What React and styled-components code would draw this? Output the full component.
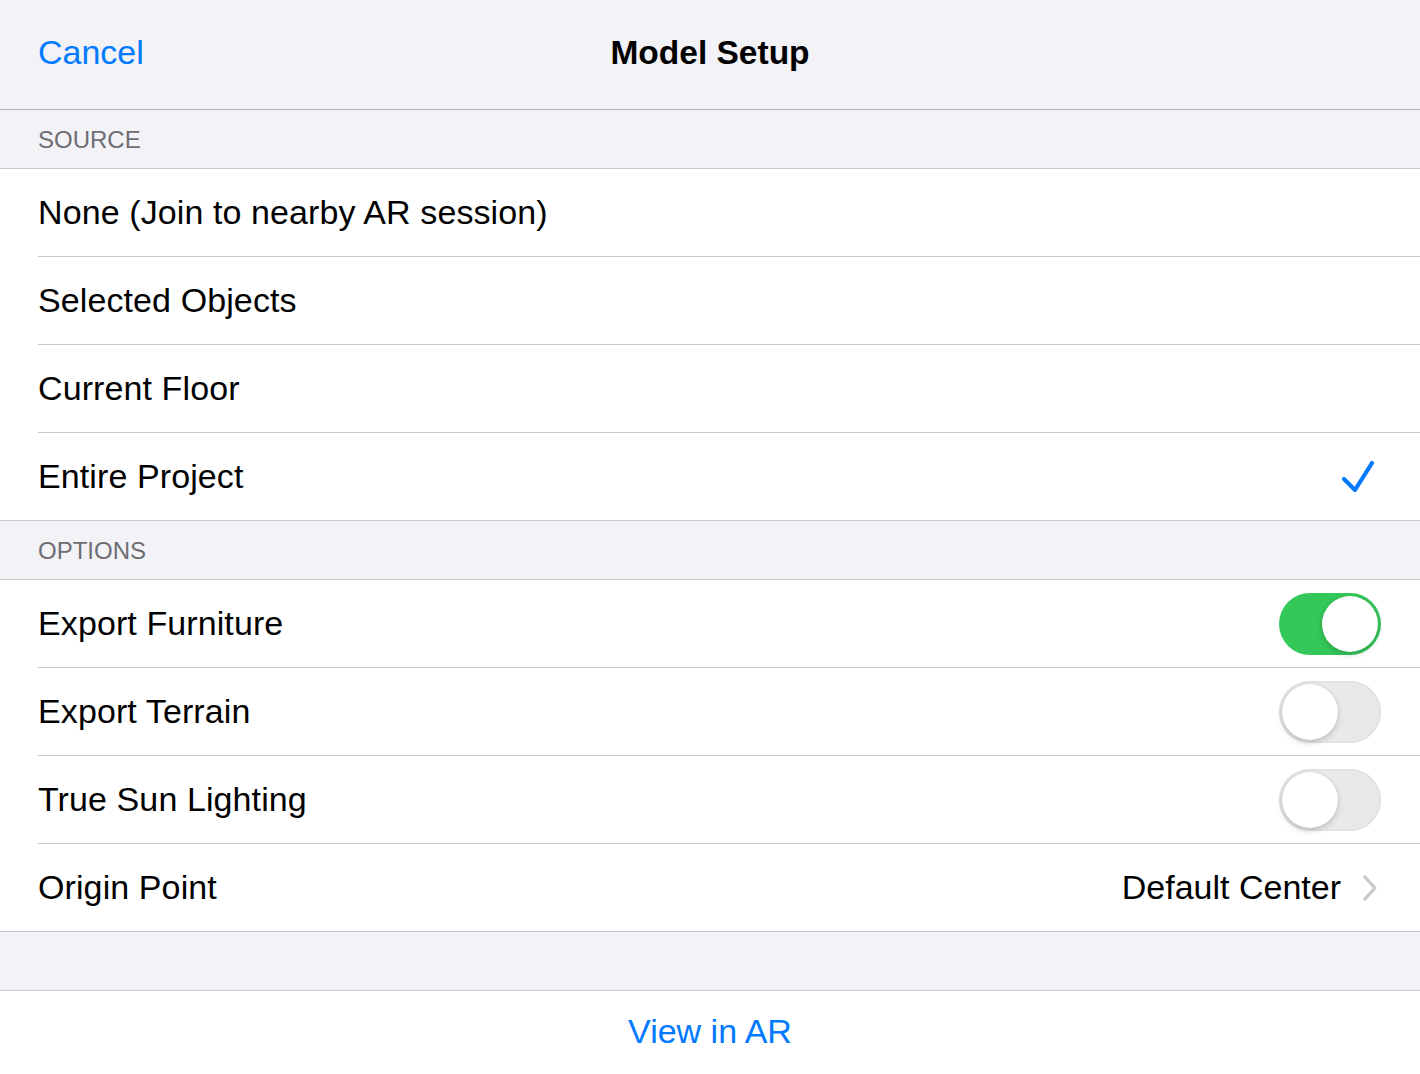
import React from "react";
import styled, { createGlobalStyle } from "styled-components";

const GlobalStyle = createGlobalStyle`
  html, body {
    margin: 0;
    padding: 0;
    background: #f2f2f7;
  }
  * {
    box-sizing: border-box;
  }
`;

const Page = styled.div`
  width: 1420px;
  height: 1074px;
  overflow: hidden;
  display: flex;
  flex-direction: column;
  background: #f2f2f7;
  font-family: "Liberation Sans", Arial, sans-serif;
  color: #000;
`;

const NavBar = styled.header`
  height: 110px;
  flex-shrink: 0;
  display: grid;
  grid-template-columns: 1fr auto 1fr;
  align-items: center;
  padding: 0 38px 4px;
  background: #f2f2f7;
  border-bottom: 1px solid #b3b3b8;
`;

const NavButton = styled.button`
  justify-self: start;
  border: 0;
  background: none;
  padding: 0;
  font-family: inherit;
  font-size: 34px;
  color: #007aff;
`;

const NavTitle = styled.h1`
  margin: 0;
  font-size: 33.5px;
  font-weight: 700;
  letter-spacing: 0;
`;

const SectionHeader = styled.div`
  height: 59px;
  flex-shrink: 0;
  display: flex;
  align-items: center;
  padding: 2px 38px 0;
  font-size: 24px;
  color: #6d6d72;
  text-transform: uppercase;
  border-bottom: 1px solid #c8c7cc;
`;

const Group = styled.section`
  background: #fff;
  border-bottom: 1px solid #c8c7cc;
  flex-shrink: 0;
`;

const Row = styled.div`
  padding-left: 38px;
  background: #fff;

  &:last-child > div {
    height: 87px;
    border-bottom: 0;
  }
`;

const RowInner = styled.div`
  height: 88px;
  display: flex;
  align-items: center;
  justify-content: space-between;
  padding-right: 39px;
  border-bottom: 1px solid #c8c7cc;
`;

const Label = styled.span`
  font-size: 34px;
  letter-spacing: 0.1px;
`;

const Detail = styled.div`
  display: flex;
  align-items: center;
  gap: 21px;
  padding-right: 3px;
  font-size: 34px;
`;

const Check = styled.svg`
  width: 34px;
  height: 34px;
  margin-right: 6px;
`;

const Track = styled.div`
  position: relative;
  width: 102px;
  height: 62px;
  border-radius: 31px;
  background: ${({ $on }) => ($on ? "#34c759" : "#e9e9eb")};
  box-shadow: ${({ $on }) => ($on ? "none" : "inset 0 0 0 2px #e3e3e6")};
`;

const Knob = styled.div`
  position: absolute;
  top: 3px;
  left: ${({ $on }) => ($on ? "43px" : "3px")};
  width: 56px;
  height: 56px;
  border-radius: 50%;
  background: #fff;
  box-shadow: 0 3px 6px rgba(0, 0, 0, 0.16), 0 0 0 1px rgba(0, 0, 0, 0.04);
`;

const Spacer = styled.div`
  height: 59px;
  flex-shrink: 0;
  border-bottom: 1px solid #c8c7cc;
`;

const Toolbar = styled.footer`
  flex: 1;
  display: flex;
  align-items: center;
  justify-content: center;
  background: #fff;
  padding-bottom: 2px;
`;

const ToolbarButton = styled.button`
  border: 0;
  background: none;
  padding: 0;
  font-family: inherit;
  font-size: 34px;
  color: #007aff;
`;

const Toggle = ({ on }) => (
  <Track $on={on}>
    <Knob $on={on} />
  </Track>
);

const CheckMark = () => (
  <Check viewBox="0 0 34 34">
    <path
      d="M3 19 L14 30 L31 3"
      fill="none"
      stroke="#007aff"
      strokeWidth="4.2"
      strokeLinecap="round"
      strokeLinejoin="round"
    />
  </Check>
);

const Chevron = () => (
  <svg width="16" height="26" viewBox="0 0 16 26">
    <path
      d="M3 2 L13 13 L3 24"
      fill="none"
      stroke="#c7c7cc"
      strokeWidth="3.2"
      strokeLinecap="round"
      strokeLinejoin="round"
    />
  </svg>
);

const sources = [
  "None (Join to nearby AR session)",
  "Selected Objects",
  "Current Floor",
  "Entire Project",
];

const options = [
  { label: "Export Furniture", on: true },
  { label: "Export Terrain", on: false },
  { label: "True Sun Lighting", on: false },
];

export default function App() {
  return (
    <Page>
      <GlobalStyle />
      <NavBar>
        <NavButton>Cancel</NavButton>
        <NavTitle>Model Setup</NavTitle>
        <div />
      </NavBar>

      <SectionHeader>Source</SectionHeader>
      <Group>
        {sources.map((s) => (
          <Row key={s}>
            <RowInner>
              <Label>{s}</Label>
              {s === "Entire Project" && <CheckMark />}
            </RowInner>
          </Row>
        ))}
      </Group>

      <SectionHeader>Options</SectionHeader>
      <Group>
        {options.map((o) => (
          <Row key={o.label}>
            <RowInner>
              <Label>{o.label}</Label>
              <Toggle on={o.on} />
            </RowInner>
          </Row>
        ))}
        <Row>
          <RowInner>
            <Label>Origin Point</Label>
            <Detail>
              Default Center
              <Chevron />
            </Detail>
          </RowInner>
        </Row>
      </Group>

      <Spacer />
      <Toolbar>
        <ToolbarButton>View in AR</ToolbarButton>
      </Toolbar>
    </Page>
  );
}
